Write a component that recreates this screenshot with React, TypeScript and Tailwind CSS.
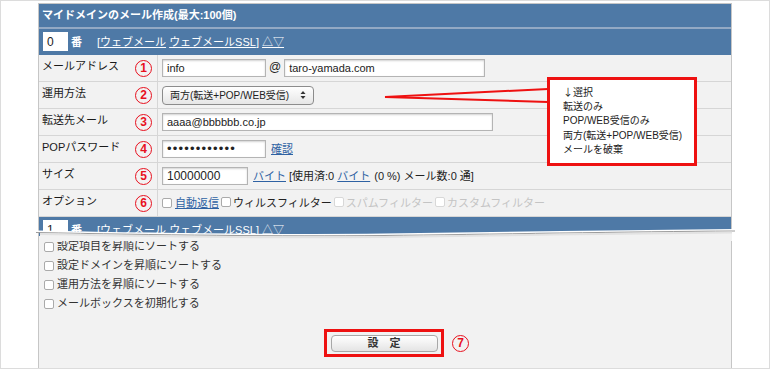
import React from "react";

const font = "font-['Liberation_Sans','Noto_Sans_CJK_JP',sans-serif]";

function Num({ n }: { n: string }) {
  return (
    <span className="flex h-[17px] w-[17px] items-center justify-center rounded-full border border-[#e8101e] text-[12px] font-bold leading-none text-[#e8101e]">
      {n}
    </span>
  );
}

function Box({ className = "", children }: { className?: string; children?: React.ReactNode }) {
  return (
    <div
      className={`flex h-[18px] items-center border border-[#b4b4b4] bg-white px-[4px] text-[11px] text-[#222] shadow-[inset_0_1px_2px_rgba(0,0,0,0.18)] ${className}`}
    >
      {children}
    </div>
  );
}

function Check({ disabled = false }: { disabled?: boolean }) {
  return (
    <span
      className={`inline-block h-[10px] w-[10px] shrink-0 rounded-[2px] border bg-white ${
        disabled ? "border-[#d8d8d8]" : "border-[#aaa]"
      }`}
    />
  );
}

function Row({ label, n, children }: { label: string; n: string; children: React.ReactNode }) {
  return (
    <div className="flex h-[27px] border-b border-[#d6d6d6]">
      <div className="flex w-[119px] shrink-0 items-center justify-between border-r border-[#d6d6d6] pl-[3px] pr-[5px]">
        <span className="pb-[3px] text-[11px] text-[#1a1a1a]">{label}</span>
        <Num n={n} />
      </div>
      <div className="flex flex-1 items-center whitespace-nowrap pl-[4px] text-[11px] text-[#222]">{children}</div>
    </div>
  );
}

function NumberBar({ value, className = "" }: { value: string; className?: string }) {
  return (
    <div className={`flex items-start bg-[#4e79a6] pl-[4px] pt-[3px] text-[11px] text-white ${className}`}>
      <div className="flex h-[19px] w-[25px] items-center bg-white pl-[4px] text-[12px] text-[#222]">{value}</div>
      <span className="ml-[3px] mt-[2px] font-bold">番</span>
      <span className="ml-[15px] mt-[2px]">
        [<span className="underline">ウェブメール</span> <span className="underline">ウェブメールSSL</span>]{" "}
        <span className="underline">△▽</span>
      </span>
    </div>
  );
}

const link = "text-[#2f62a3] underline";

export default function App() {
  return (
    <div className={`relative h-[369px] w-[770px] overflow-hidden border border-[#dcdcdc] bg-white ${font}`}>
      <div className="ml-[37px] mt-[2px] flex h-[365px] w-[694px] flex-col border-x border-t border-[#c6c6c6] bg-[#f2f2f2]">
        <div className="flex h-[25px] shrink-0 items-center border-b-2 border-[#93a9c4] bg-[#4e79a6] pl-[3px] text-[11px] font-bold text-white">
          マイドメインのメール作成(最大:100個)
        </div>
        <NumberBar value="0" className="h-[26px] shrink-0" />

        <Row label="メールアドレス" n="1">
          <Box className="w-[104px]">info</Box>
          <span className="mx-[3px] pb-[3px] text-[12px]">@</span>
          <Box className="w-[201px]">taro-yamada.com</Box>
        </Row>
        <Row label="運用方法" n="2">
          <div className="flex h-[19px] w-[152px] items-center justify-between rounded-[4px] border border-[#8c8c8c] bg-gradient-to-b from-white to-[#e6e6e6] pl-[7px] pr-[7px] text-[10px]">
            <span className="whitespace-nowrap">両方(転送+POP/WEB受信)</span>
            <svg width="6" height="10" viewBox="0 0 6 10" className="shrink-0">
              <path d="M3 1 L5.5 4 L0.5 4 Z" fill="#333" />
              <path d="M3 9 L5.5 6 L0.5 6 Z" fill="#333" />
            </svg>
          </div>
        </Row>
        <Row label="転送先メール" n="3">
          <Box className="w-[331px]">aaaa@bbbbbb.co.jp</Box>
        </Row>
        <Row label="POPパスワード" n="4">
          <Box className="w-[104px] text-[13px] tracking-[1.2px]">••••••••••••</Box>
          <span className={`ml-[5px] ${link}`}>確認</span>
        </Row>
        <Row label="サイズ" n="5">
          <Box className="w-[86px] border-[#6f9fd6] text-[12px] shadow-[0_0_2px_1px_rgba(110,160,220,0.6)]">10000000</Box>
          <span className={`ml-[5px] ${link}`}>バイト</span>
          <span className="ml-[3px]">[使用済:0</span>
          <span className={`ml-[3px] ${link}`}>バイト</span>
          <span className="ml-[4px]">(0 %) メール数:0 通]</span>
        </Row>
        <Row label="オプション" n="6">
          <div className="flex items-center">
            <Check />
            <span className={`ml-[3px] ${link}`}>自動返信</span>
            <span className="ml-[2px]"><Check /></span>
            <span className="ml-[2px]">ウィルスフィルター</span>
            <span className="ml-[2px]"><Check disabled /></span>
            <span className="ml-[2px] text-[#c4c4c4]">スパムフィルター</span>
            <span className="ml-[2px]"><Check disabled /></span>
            <span className="ml-[2px] text-[#c4c4c4]">カスタムフィルター</span>
          </div>
        </Row>
        <NumberBar value="1" className="h-[19px] shrink-0 overflow-hidden" />

        <div className="flex flex-1 flex-col pl-[5px] pt-[1px] text-[11px] text-[#333]">
          {[
            "設定項目を昇順にソートする",
            "設定ドメインを昇順にソートする",
            "運用方法を昇順にソートする",
            "メールボックスを初期化する",
          ].map((t) => (
            <div key={t} className="flex h-[19px] items-center gap-[3px]">
              <Check />
              <span>{t}</span>
            </div>
          ))}
          <div className="ml-[280px] mt-[16px] flex items-center">
            <div className="flex h-[28px] w-[120px] items-center justify-center border-[3px] border-[#ee1111]">
              <div className="flex h-[17px] w-[107px] items-center justify-center rounded-[4px] border border-[#a8a8a8] bg-gradient-to-b from-white to-[#e4e4e4] text-[11px] font-bold text-[#333]">
                設　定
              </div>
            </div>
            <span className="ml-[8px]">
              <Num n="7" />
            </span>
          </div>
        </div>
      </div>

      {/* torn edge */}
      <svg className="absolute left-[33px] top-[224px]" width="704" height="16" viewBox="0 0 704 16">
        <path d="M6 6.5 C 120 9, 250 10.5, 350 9.5 S 600 5.5, 698 5 L 698 16 L 6 16 Z" fill="#f2f2f2" />
        <path d="M2 6.3 C 120 8.8, 250 10.3, 350 9.3 S 600 5.3, 701 4.8" fill="none" stroke="#ffffff" strokeWidth="1.5" />
        <path d="M2 7.5 C 120 10, 250 11.5, 350 10.5 S 600 6.5, 701 6" fill="none" stroke="#9c9c9c" strokeWidth="1" />
        <path d="M6 9 C 120 11.5, 250 13, 350 12 S 600 8, 698 7.5" fill="none" stroke="#e2e2e2" strokeWidth="2" />
      </svg>

      {/* callout */}
      <svg className="absolute left-0 top-0" width="770" height="369">
        <path d="M547 88 L384 96 L547 101" fill="none" stroke="#ee1111" strokeWidth="2" />
      </svg>
      <div className="absolute left-[546px] top-[76px] h-[89px] w-[150px] border-[3px] border-[#ee1111] bg-white pl-[13px] pt-[5px] text-[10px] leading-[14.2px] text-[#222]">
        <div>
          <span className="font-['Noto_Sans_CJK_JP',sans-serif]">↓</span>選択
        </div>
        <div>転送のみ</div>
        <div>POP/WEB受信のみ</div>
        <div>両方(転送+POP/WEB受信)</div>
        <div>メールを破棄</div>
      </div>
    </div>
  );
}
